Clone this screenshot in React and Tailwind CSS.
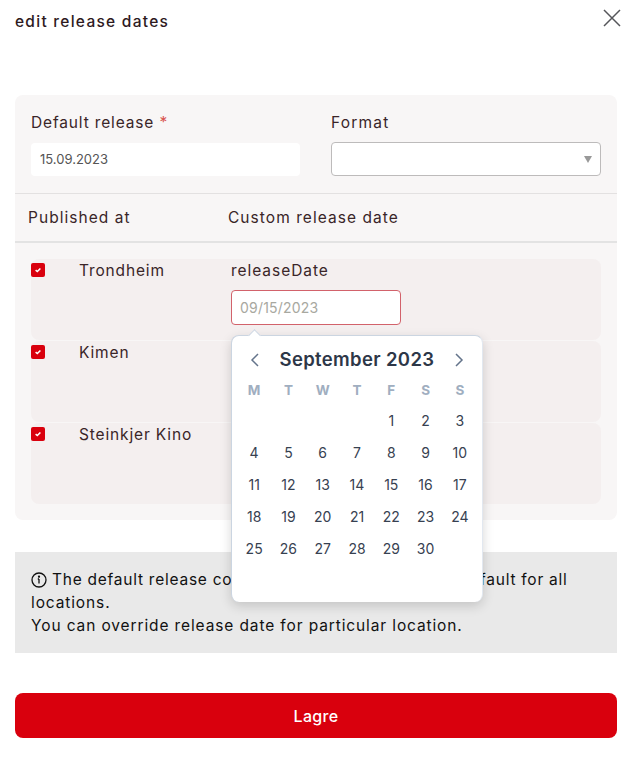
const days = [
  ["", "", "", "", 1, 2, 3],
  [4, 5, 6, 7, 8, 9, 10],
  [11, 12, 13, 14, 15, 16, 17],
  [18, 19, 20, 21, 22, 23, 24],
  [25, 26, 27, 28, 29, 30, ""],
];
const head = ["M", "T", "W", "T", "F", "S", "S"];

function Check() {
  return (
    <span className="flex h-[14px] w-[14px] shrink-0 items-center justify-center rounded-[2px] bg-[#d9000d]">
      <svg width="8" height="8" viewBox="0 0 8 8" fill="none" stroke="white" strokeWidth="1.5">
        <path d="M1.6 4.2 3.3 5.6 6.4 2.4" />
      </svg>
    </span>
  );
}

function Calendar() {
  return (
    <div className="absolute left-0 top-[76px] z-10 h-[267px] w-[252px] rounded-[8px] border border-[#cbd5e1] border-b-0 border-r-[#e2e8f0] bg-white px-[5px] shadow-[0_4px_12px_rgba(0,0,0,0.16)]">
      <div className="absolute -top-[5px] left-[18px] h-[9px] w-[9px] rotate-45 border-l border-t border-[#cbd5e1] bg-white" />
      <div className="flex h-[43px] items-center justify-between px-[12px] pt-[5px]">
        <svg width="12" height="16" viewBox="0 0 12 16" fill="none" stroke="#64748b" strokeWidth="1.5">
          <path d="M9 2 3 8l6 6" />
        </svg>
        <span className="text-[18.5px] font-semibold tracking-[0.35px] text-[#2d3748]">September 2023</span>
        <svg width="12" height="16" viewBox="0 0 12 16" fill="none" stroke="#64748b" strokeWidth="1.5">
          <path d="M3 2l6 6-6 6" />
        </svg>
      </div>
      <div className="grid h-[22px] grid-cols-7 items-center text-center text-[13.5px] font-bold text-[#a0aec0]">
        {head.map((d, i) => (
          <span key={i}>{d}</span>
        ))}
      </div>
      <div className="mt-[3px] grid grid-cols-7 text-center text-[14px] text-[#374151]">
        {days.flat().map((d, i) => (
          <span key={i} className="flex h-[32px] items-center justify-center">
            {d}
          </span>
        ))}
      </div>
    </div>
  );
}

function Row({ name, children }) {
  return (
    <div className="relative flex h-[81px] rounded-[8px] bg-[#f4efef]">
      <div className="absolute -top-px left-0 pt-[5px]">
        <Check />
      </div>
      <span className="ml-[48px] w-[152px] pt-[1px] text-[15.5px] leading-[22px] tracking-[0.85px] text-[#3a2528]">{name}</span>
      {children}
    </div>
  );
}

export default function App() {
  return (
    <div className="relative h-[762px] w-[629px] overflow-hidden bg-white px-[15px] font-['Inter','Liberation_Sans',sans-serif]">
      <div className="flex h-[95px] items-start justify-between">
        <h1 className="pt-[11px] text-[15.5px] font-medium leading-[22px] tracking-[1.27px] text-[#2e1a1e]">edit release dates</h1>
        <svg className="mr-[-8px] mt-[8px]" width="20" height="20" viewBox="0 0 20 20" fill="none" stroke="#55565a" strokeWidth="1.5">
          <path d="M2 2l16 16M18 2 2 18" />
        </svg>
      </div>

      <div className="h-[425px] w-[602px] rounded-[8px] bg-[#f8f6f6]">
        <div className="flex h-[99px] gap-[31px] border-b border-[#e3e1e1] px-[16px] pt-[18px]">
          <div className="w-[269px]">
            <label className="block h-[20px] text-[15.5px] leading-[20px] tracking-[0.85px] text-[#3a2528]">
              Default release <span className="text-[#d9534f]">*</span>
            </label>
            <div className="mt-[10px] flex h-[33px] items-center rounded-[4px] bg-white pl-[9px] text-[13px] text-[#555]">15.09.2023</div>
          </div>
          <div className="w-[270px]">
            <label className="block h-[20px] text-[15.5px] leading-[20px] tracking-[1.2px] text-[#3a2528]">Format</label>
            <div className="mt-[9px] flex h-[34px] items-center justify-end rounded-[4px] border border-[#bdbbbb] bg-white pr-[8px]">
              <svg width="8" height="7" viewBox="0 0 8 7">
                <path d="M0 0h8L4 7z" fill="#999" />
              </svg>
            </div>
          </div>
        </div>
        <div className="flex h-[49px] items-center border-b-2 border-[#e3e3e3] pl-[13px] pt-[1px] text-[15.5px] tracking-[1.05px] text-[#3a2528]">
          <span className="w-[200px]">Published at</span>
          <span>Custom release date</span>
        </div>
        <div className="mx-[16px] mt-[16px] flex w-[570px] flex-col gap-px">
          <Row name="Trondheim">
            <div className="relative pt-[1px]">
              <span className="block text-[15.5px] leading-[22px] tracking-[0.95px] text-[#3a2528]">releaseDate</span>
              <div className="mt-[8px] flex h-[35px] w-[170px] items-center rounded-[4px] border border-[#d2626b] bg-white pl-[8px] text-[14px] tracking-[0.2px] text-[#a8a8a0]">
                09/15/2023
              </div>
              <Calendar />
            </div>
          </Row>
          <Row name="Kimen" />
          <Row name="Steinkjer Kino" />
        </div>
      </div>

      <div className="mt-[32px] h-[101px] w-[602px] bg-[#e9e9e9] px-[16px] pt-[16px] text-[15.5px] leading-[23px] tracking-[0.88px] text-[#111]">
        <p className="flex items-center gap-[5px] whitespace-nowrap tracking-[0.75px]">
          <svg width="16" height="16" viewBox="0 0 16 16" fill="none" stroke="#111" strokeWidth="1.3" className="shrink-0">
            <circle cx="8" cy="8" r="7" />
            <path d="M8 7v4.5M6.8 7H8" />
            <circle cx="8" cy="4.7" r="0.5" fill="#111" />
          </svg>
          The default release could be set here and used as default for all
        </p>
        <p>locations.</p>
        <p>You can override release date for particular location.</p>
      </div>

      <button className="mt-[40px] flex h-[45px] w-[602px] items-center justify-center rounded-[8px] bg-[#d9000d] pt-[1px] text-[16px] font-medium tracking-[0.3px] text-white">
        Lagre
      </button>
    </div>
  );
}
